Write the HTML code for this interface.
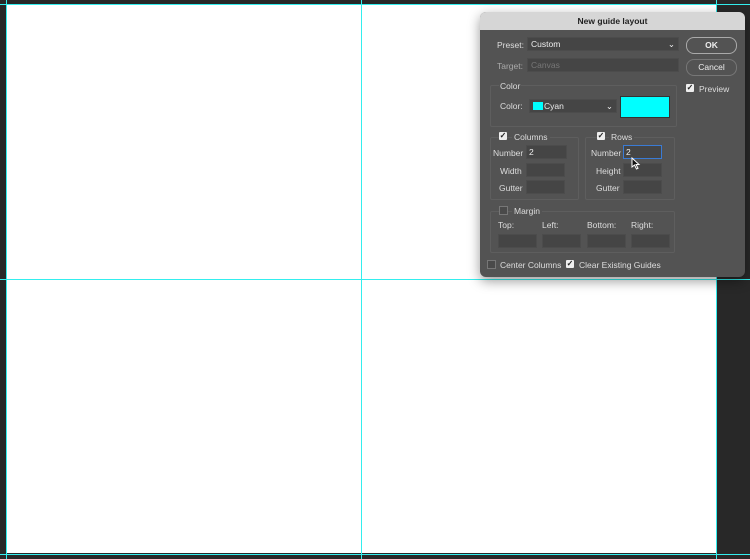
<!DOCTYPE html><html><head><style>
body{margin:0;width:750px;height:559px;background:#282828;position:relative;overflow:hidden;font-family:"Liberation Sans",sans-serif;font-size:8.5px;color:#ddd}
.a{position:absolute}
.cv{left:7px;top:5px;width:709px;height:548px;background:#fff}
.gv{width:1px;background:#3ee;top:0;height:559px}
.gh{height:1px;background:#3ee;left:0;width:750px}
.dlg{left:480px;top:12px;width:265px;height:265px;background:#535353;border-radius:6px;box-shadow:0 4px 12px rgba(0,0,0,.4);overflow:hidden}
.tt{left:0;top:0;width:265px;height:18px;background:#d6d6d6;color:#222;font-weight:bold;text-align:center;line-height:18px;font-size:8.5px}
.f{background:#454545;border:1px solid #4c4c4c;height:12px}
.box{border:1px solid #5e5e5e;border-radius:2px}
.cb{width:8px;height:8px;background:#eee;border-radius:1px;color:#222;font-size:8px;line-height:8px;text-align:center;font-weight:bold}
.cbo{width:7px;height:7px;border:1px solid #777;background:#4a4a4a}
.btn{border:1px solid #aaa;border-radius:8px;color:#eee;text-align:center;line-height:15px;width:49px;height:15px}
</style></head><body>
<div class="a cv"></div>
<div class="a gv" style="left:6px"></div><div class="a gv" style="left:361px"></div><div class="a gv" style="left:716px"></div>
<div class="a gh" style="top:4px"></div><div class="a gh" style="top:279px"></div><div class="a gh" style="top:554px"></div>
<div class="a dlg">
<div class="a tt">New guide layout</div>
<div class="a" style="left:17px;top:28px">Preset:</div>
<div class="a f" style="left:47px;top:25px;width:147px;color:#eee;line-height:12px;padding-left:3px">Custom<span style="float:right;margin-right:3px">⌄</span></div>
<div class="a" style="left:17px;top:49px;color:#aaa">Target:</div>
<div class="a f" style="left:47px;top:46px;width:147px;color:#777;line-height:12px;padding-left:3px">Canvas</div>
<div class="a box" style="left:10px;top:73px;width:185px;height:40px"></div>
<div class="a" style="left:19px;top:69px;background:#535353;padding:0 1px">Color</div>
<div class="a" style="left:20px;top:89px">Color:</div>
<div class="a f" style="left:49px;top:87px;width:86px;line-height:12px;color:#eee"><span style="display:inline-block;width:10px;height:8px;background:#0ff;margin:0 1px 0 3px;vertical-align:-1px"></span>Cyan<span style="float:right;margin-right:3px">⌄</span></div>
<div class="a" style="left:140px;top:84px;width:48px;height:20px;background:#0ff;border:1px solid #333"></div>
<div class="a box" style="left:10px;top:125px;width:87px;height:61px"></div>
<div class="a cb" style="left:19px;top:120px">✓</div><div class="a" style="left:32px;top:120px;background:#535353;padding:0 2px">Columns</div>
<div class="a" style="left:13px;top:136px">Number</div><div class="a f" style="left:46px;top:133px;width:37px;color:#eee;line-height:12px;padding-left:2px">2</div>
<div class="a" style="left:20px;top:154px">Width</div><div class="a f" style="left:46px;top:151px;width:37px"></div>
<div class="a" style="left:19px;top:171px">Gutter</div><div class="a f" style="left:46px;top:168px;width:37px"></div>
<div class="a box" style="left:105px;top:125px;width:88px;height:61px"></div>
<div class="a cb" style="left:117px;top:120px">✓</div><div class="a" style="left:129px;top:120px;background:#535353;padding:0 2px">Rows</div>
<div class="a" style="left:111px;top:136px">Number</div><div class="a f" style="left:143px;top:133px;width:35px;border-color:#3a7bd5;color:#eee;line-height:12px;padding-left:2px">2</div>
<div class="a" style="left:116px;top:154px">Height</div><div class="a f" style="left:143px;top:151px;width:37px"></div>
<div class="a" style="left:116px;top:171px">Gutter</div><div class="a f" style="left:143px;top:168px;width:37px"></div>
<svg class="a" style="left:151px;top:145px" width="10" height="13" viewBox="0 0 10 13"><path d="M1 1 L1 10 L3.5 8 L5.5 12 L7 11.3 L5 7.5 L8 7.5 Z" fill="#111" stroke="#fff" stroke-width="1"/></svg>
<div class="a box" style="left:10px;top:199px;width:183px;height:40px"></div>
<div class="a cbo" style="left:19px;top:194px"></div><div class="a" style="left:32px;top:194px;background:#535353;padding:0 2px">Margin</div>
<div class="a" style="left:18px;top:208px">Top:</div><div class="a" style="left:62px;top:208px">Left:</div><div class="a" style="left:107px;top:208px">Bottom:</div><div class="a" style="left:151px;top:208px">Right:</div>
<div class="a f" style="left:18px;top:222px;width:37px"></div><div class="a f" style="left:62px;top:222px;width:37px"></div><div class="a f" style="left:107px;top:222px;width:37px"></div><div class="a f" style="left:151px;top:222px;width:37px"></div>
<div class="a cbo" style="left:7px;top:248px"></div><div class="a" style="left:20px;top:248px">Center Columns</div>
<div class="a cb" style="left:86px;top:248px">✓</div><div class="a" style="left:99px;top:248px">Clear Existing Guides</div>
<div class="a btn" style="left:206px;top:25px;font-weight:bold">OK</div>
<div class="a btn" style="left:206px;top:47px;border-color:#777">Cancel</div>
<div class="a cb" style="left:206px;top:72px">✓</div><div class="a" style="left:219px;top:72px">Preview</div>
</div>
</body></html>
